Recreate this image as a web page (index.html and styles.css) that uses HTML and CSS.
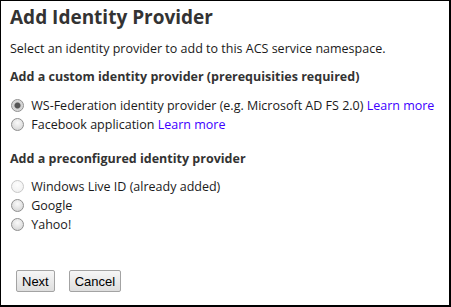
FILE: index.html
```html
<!DOCTYPE html>
<html lang="en">
<head>
    <meta charset="UTF-8">
    <title>Add Identity Provider</title>
    <link rel="stylesheet" href="styles.css">
</head>
<body>

<div class="dialog">
    <h1>Add Identity Provider</h1>
    <p class="intro">Select an identity provider to add to this ACS service namespace.</p>

    <!-- Custom providers -->
    <h2>Add a custom identity provider (prerequisities required)</h2>
    <ul class="options first">
        <li><input type="radio" name="idp" checked> WS-Federation identity provider (e.g. Microsoft AD FS 2.0) <a href="javascript:void(0)">Learn more</a></li>
        <li><input type="radio" name="idp"> Facebook application <a href="javascript:void(0)">Learn more</a></li>
    </ul>

    <!-- Preconfigured providers -->
    <h2 class="second">Add a preconfigured identity provider</h2>
    <ul class="options">
        <li><input type="radio" name="idp" disabled> Windows Live ID (already added)</li>
        <li><input type="radio" name="idp"> Google</li>
        <li><input type="radio" name="idp"> Yahoo!</li>
    </ul>

    <div class="actions">
        <button>Next</button>
        <button>Cancel</button>
    </div>
</div>

</body>
</html>
```

FILE: styles.css
```css
html, body {
    margin: 0;
    padding: 0;
    background: #fff;
}

.dialog {
    box-sizing: border-box;
    width: 451px;
    height: 307px;
    border: 1px solid #000;
    border-right-width: 2px;
    border-bottom-width: 2px;
    padding: 0 0 0 9px;
    font-family: 'Open Sans', Arial, sans-serif;
    font-size: 12.5px;
    color: #1a1a1a;
    display: flex;
    flex-direction: column;
}

h1 {
    margin: 2px 0 0;
    font-size: 19px;
    line-height: 28px;
    font-weight: bold;
    color: #333;
}

.intro {
    margin: 9px 0 0;
    line-height: 18px;
}

h2 {
    margin: 10px 0 0;
    font-size: 12.5px;
    line-height: 18px;
    font-weight: bold;
    color: #333;
}

h2.second {
    margin-top: 16px;
}

/* Radio lists */
.options {
    list-style: none;
    margin: 9px 0 0;
    padding: 0;
}

.options.first {
    margin-top: 10px;
}

.options li {
    display: flex;
    align-items: center;
    height: 19px;
    white-space: pre;
}

.options a {
    color: #3d00ff;
    text-decoration: none;
}

.options input {
    appearance: none;
    -webkit-appearance: none;
    box-sizing: border-box;
    width: 13px;
    height: 13px;
    margin: 0 4px 0 1px;
    border: 1px solid #8f8f8f;
    border-radius: 50%;
    background: radial-gradient(circle at 50% 35%, #fafafa 0%, #dcdcdc 70%, #c8c8c8 100%);
    flex: none;
}

.options input:checked {
    background: radial-gradient(circle, #555 0, #555 2.5px, #cfcfcf 3.5px, #e8e8e8 100%);
}

.options input:disabled {
    border-color: #c8c8c8;
    background: radial-gradient(circle at 50% 35%, #fdfdfd 0%, #eeeeee 100%);
}

/* Buttons */
.actions {
    margin-top: auto;
    margin-bottom: 13px;
    padding-left: 6px;
    display: flex;
    gap: 14px;
}

.actions button {
    font-family: 'Liberation Sans', Arial, sans-serif;
    font-size: 13px;
    height: 22px;
    padding: 0 5px;
    border: 1px solid #a3a3a3;
    border-radius: 2px;
    background: linear-gradient(#f6f6f6, #dedede);
    color: #000;
}
```
